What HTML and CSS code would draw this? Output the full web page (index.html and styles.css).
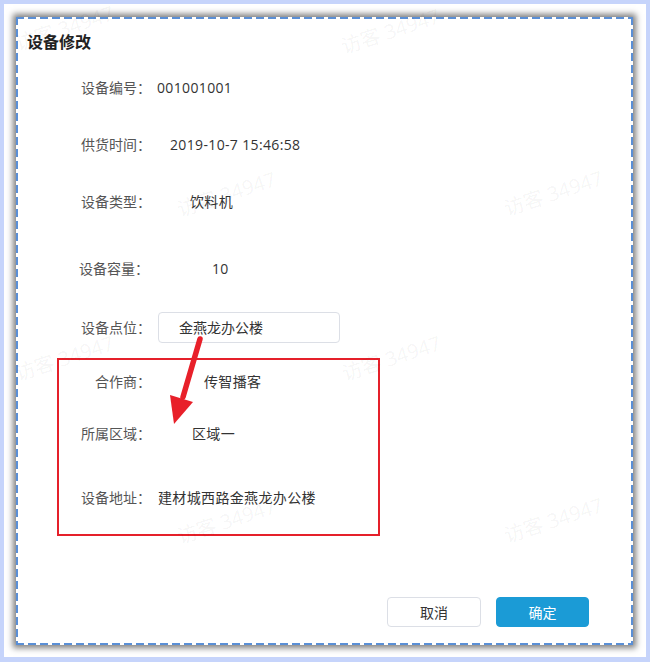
FILE: index.html
```html
<!DOCTYPE html>
<html lang="zh-CN">
<head>
<meta charset="utf-8">
<title>设备修改</title>
<link rel="stylesheet" href="styles.css">
</head>
<body>
<div class="frame">
  <div class="dialog">
    <div class="title">设备修改</div>
    <div class="row r1"><span class="label">设备编号：</span><span class="value v1">001001001</span></div>
    <div class="row r2"><span class="label">供货时间：</span><span class="value v2">2019-10-7 15:46:58</span></div>
    <div class="row r3"><span class="label">设备类型：</span><span class="value v3">饮料机</span></div>
    <div class="row r4"><span class="label label-cap">设备容量：</span><span class="value v4">10</span></div>
    <div class="row row-input"><span class="label">设备点位：</span><div class="input">金燕龙办公楼</div></div>
    <div class="highlight">
      <div class="row r6"><span class="label">合作商：</span><span class="value v6">传智播客</span></div>
      <div class="row r7"><span class="label">所属区域：</span><span class="value v7">区域一</span></div>
      <div class="row r8"><span class="label">设备地址：</span><span class="value v8">建材城西路金燕龙办公楼</span></div>
    </div>
    <div class="footer">
      <button class="btn btn-cancel">取消</button>
      <button class="btn btn-primary">确定</button>
    </div>
  </div>
</div>
<div class="overlay">
  <span class="wm wm-a">访客 34947</span>
  <span class="wm wm-b">访客 34947</span>
  <span class="wm wm-c">访客 34947</span>
  <span class="wm wm-d">访客 34947</span>
  <span class="wm wm-e">访客 34947</span>
  <span class="wm wm-f">访客 34947</span>
  <span class="wm wm-g">访客 34947</span>
  <span class="wm wm-h">访客 34947</span>
  <svg class="arrow" width="650" height="662" viewBox="0 0 650 662">
    <line x1="200" y1="339" x2="183" y2="397" stroke="#e8202a" stroke-width="5.5" stroke-linecap="round"/>
    <polygon points="174,424 193,402 170,395" fill="#e8202a"/>
  </svg>
</div>
</body>
</html>
```
FILE: styles.css
```css
html, body {
  margin: 0;
  padding: 0;
}
body {
  position: relative;
  width: 650px;
  height: 662px;
  box-sizing: border-box;
  padding: 4px 4px 5px 4px;
  background: #c6d4fb;
  font-family: "Open Sans", "Noto Sans CJK SC", sans-serif;
  font-size: 14px;
  overflow: hidden;
}
.frame {
  height: 100%;
  background: #ffffff;
  padding: 13px 0 0 12px;
  box-sizing: border-box;
}
.dialog {
  width: 617px;
  height: 628px;
  box-sizing: border-box;
  padding: 2px;
  display: flex;
  flex-direction: column;
  background:
    repeating-linear-gradient(90deg, #5a8fd6 0 8px, transparent 8px 12px) top left / 100% 2px no-repeat,
    repeating-linear-gradient(90deg, #5a8fd6 0 8px, transparent 8px 12px) bottom left / 100% 2px no-repeat,
    repeating-linear-gradient(180deg, #5a8fd6 0 8px, transparent 8px 12px) top left / 2px 100% no-repeat,
    repeating-linear-gradient(180deg, #5a8fd6 0 8px, transparent 8px 12px) top right / 2px 100% no-repeat,
    #ffffff;
  box-shadow: 0 0 6px 3px rgba(0, 0, 0, 0.5);
}
.title {
  margin: 12px 0 0 9px;
  height: 22px;
  line-height: 22px;
  font-size: 16px;
  font-weight: 700;
  color: #222;
}
.row {
  display: flex;
  align-items: center;
  height: 20px;
  line-height: 20px;
  padding-left: 63px;
}
.label {
  width: 70px;
  flex: none;
  text-align: right;
  color: #555;
  white-space: nowrap;
}
.label-cap {
  margin-left: -2px;
}
.value {
  color: #333;
  white-space: nowrap;
  letter-spacing: 0.35px;
}
.r1 { margin-top: 25px; }
.r2 { margin-top: 37px; }
.r3 { margin-top: 37px; }
.r4 { margin-top: 47px; }
.v1 { margin-left: 6px; }
.v2 { margin-left: 19px; }
.v3 { margin-left: 39px; }
.v4 { margin-left: 63px; }
.row-input {
  margin-top: 33px;
  height: 31px;
}
.input {
  margin-left: 7px;
  width: 182px;
  height: 31px;
  box-sizing: border-box;
  border: 1px solid #dcdfe6;
  border-radius: 4px;
  padding-left: 20px;
  line-height: 29px;
  color: #333;
}
.highlight {
  margin: 15px 0 0 39px;
  width: 323px;
  height: 178px;
  box-sizing: border-box;
  border: 2px solid #e5202a;
}
.highlight .row {
  padding-left: 22px;
}
.r6 { margin-top: 12px; }
.r7 { margin-top: 32px; }
.r8 { margin-top: 44px; }
.v6 { margin-left: 53px; }
.v7 { margin-left: 41px; }
.v8 { margin-left: 7px; }
.footer {
  margin-top: auto;
  display: flex;
  justify-content: flex-end;
  gap: 15px;
  padding: 0 42px 16px 0;
}
.btn {
  height: 30px;
  border-radius: 4px;
  font-family: "Open Sans", "Noto Sans CJK SC", sans-serif;
  font-size: 14px;
  padding: 0;
  cursor: pointer;
}
.btn-cancel {
  width: 94px;
  background: #fff;
  border: 1px solid #dcdfe6;
  color: #333;
}
.btn-primary {
  width: 93px;
  background: #1b9bd6;
  border: 1px solid #1b9bd6;
  color: #fff;
}
.overlay {
  position: absolute;
  left: 0;
  top: 0;
  width: 650px;
  height: 662px;
  pointer-events: none;
}
.wm {
  position: absolute;
  transform: translate(-50%, -50%) rotate(-18deg);
  font-size: 20px;
  color: rgba(0, 0, 0, 0.05);
  white-space: nowrap;
  font-family: "Open Sans", "Noto Sans CJK SC", sans-serif;
}
.wm-a { left: 64px; top: 27px; }
.wm-b { left: 390px; top: 30px; }
.wm-c { left: 226px; top: 193px; }
.wm-d { left: 553px; top: 192px; }
.wm-e { left: 64px; top: 357px; }
.wm-f { left: 391px; top: 357px; }
.wm-g { left: 226px; top: 520px; }
.wm-h { left: 553px; top: 519px; }
.arrow {
  position: absolute;
  left: 0;
  top: 0;
}
```
